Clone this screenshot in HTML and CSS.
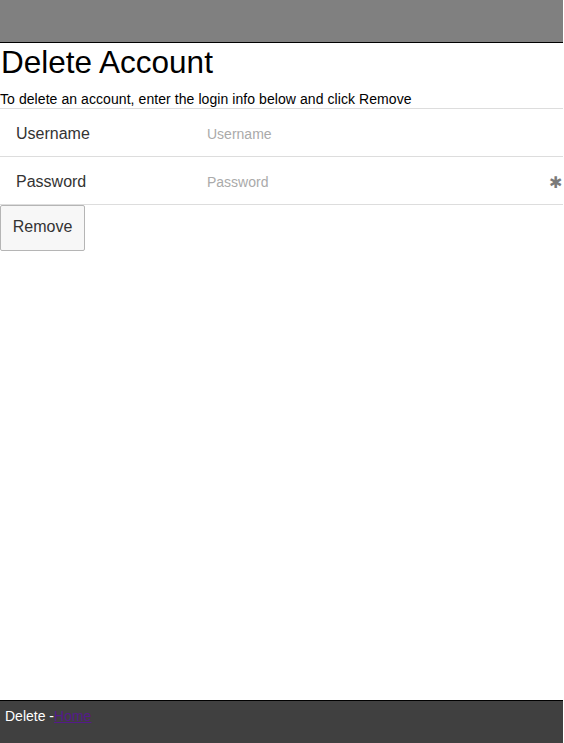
FILE: index.html
```html
<!DOCTYPE html>
<html>
<head>
<meta charset="utf-8">
<link rel="stylesheet" href="styles.css">
</head>
<body>
<div class="page">
  <header class="topbar"></header>
  <main class="content">
    <h1 class="title">Delete Account</h1>
    <p class="intro">To delete an account, enter the login info below and click Remove</p>
    <div class="form">
      <div class="row">
        <span class="label">Username</span>
        <span class="field placeholder">Username</span>
      </div>
      <div class="row">
        <span class="label">Password</span>
        <span class="field placeholder">Password</span>
        <span class="star">&#x2731;</span>
      </div>
    </div>
    <button class="btn">Remove</button>
  </main>
  <footer class="footer"><span>Delete -</span><a class="link" href="#">Home</a></footer>
</div>
</body>
</html>
```
FILE: styles.css
```css
html, body {
  margin: 0;
  padding: 0;
  background: #fff;
}
.page {
  width: 563px;
  height: 743px;
  display: flex;
  flex-direction: column;
  font-family: "Liberation Sans", Arial, sans-serif;
}
.topbar {
  height: 42px;
  background: #808080;
  border-bottom: 1px solid #000;
  flex: none;
}
.content {
  flex: 1;
}
.title {
  margin: 2px 0 0 1px;
  font-size: 31.5px;
  font-weight: normal;
  line-height: 34px;
  color: #000;
}
.intro {
  margin: 12px 0 0 0;
  font-size: 14px;
  line-height: 17px;
  color: #000;
  letter-spacing: 0.07px;
}
.form {
  border-top: 1px solid #ddd;
}
.row {
  height: 47px;
  box-sizing: border-box;
  height: 48px;
  padding-top: 2px;
  border-bottom: 1px solid #ddd;
  display: flex;
  align-items: center;
  position: relative;
}
.label {
  width: 191px;
  padding-left: 16px;
  font-size: 16px;
  color: #333;
}
.field {
  font-size: 14px;
  color: #aaa;
}
.star {
  position: absolute;
  right: 1px;
  top: 16px;
  font-size: 16px;
  color: #7a7a7a;
}
.btn {
  display: block;
  margin: 0;
  width: 85px;
  height: 46px;
  background: #f7f7f7;
  border: 1px solid #b5b5b5;
  border-radius: 2px;
  font-family: "Liberation Sans", Arial, sans-serif;
  font-size: 16px;
  color: #333;
  padding: 0 0 2px 0;
}
.footer {
  flex: none;
  display: flex;
  background: #404040;
  border-top: 1px solid #000;
  color: #fff;
  font-size: 14px;
  line-height: 16px;
  padding: 7px 0 0 5px;
  box-sizing: border-box;
  height: 43px;
}
.link {
  color: #551a8b;
}
```
